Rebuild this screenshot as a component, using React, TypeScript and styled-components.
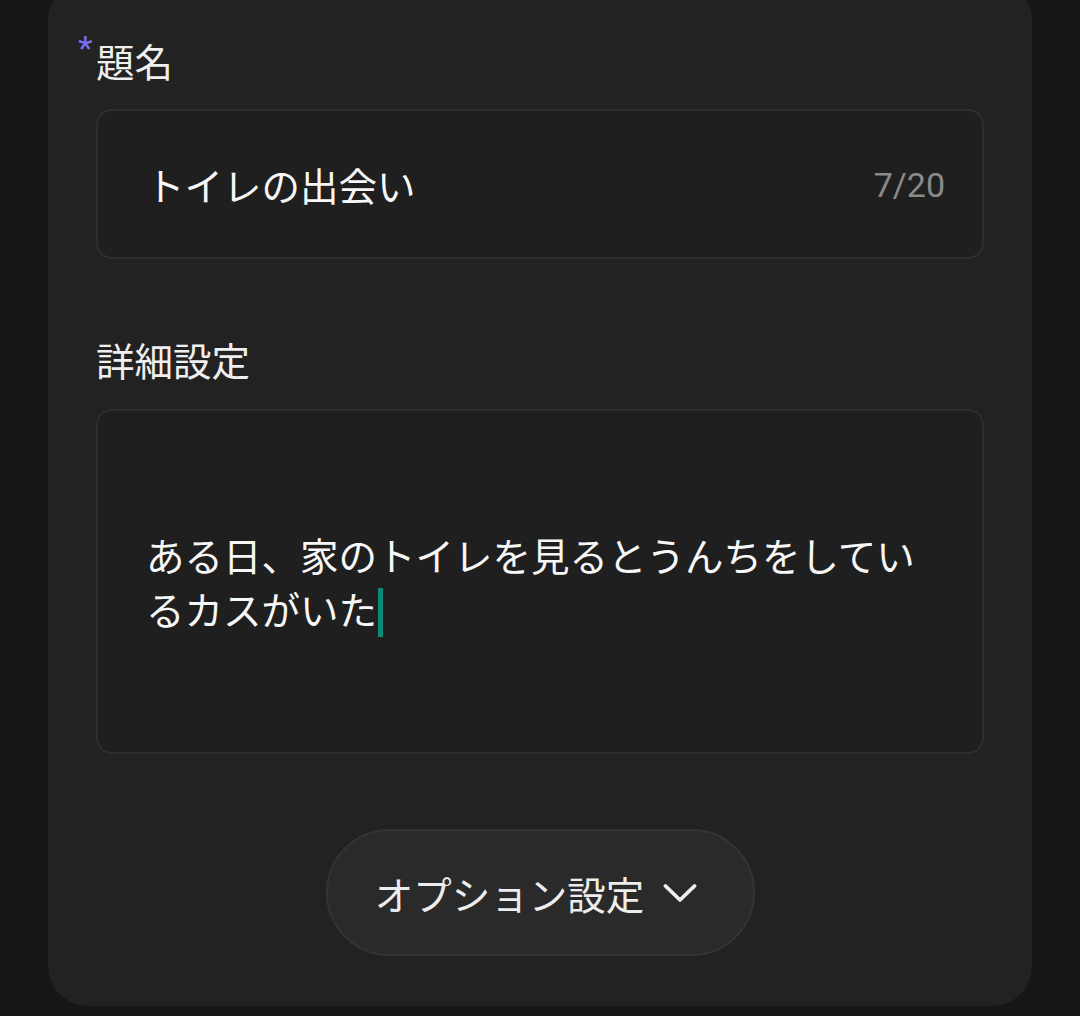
import React from 'react'
import styled, { createGlobalStyle } from 'styled-components'

const GlobalStyle = createGlobalStyle`
  html, body {
    margin: 0;
    padding: 0;
    background: #161616;
  }
  body {
    font-family: 'Noto Sans CJK JP', 'Noto Sans', sans-serif;
    color: #eeeeee;
  }
`

const Page = styled.div`
  width: 1080px;
  height: 1016px;
  overflow: hidden;
  padding: 0 48px;
  box-sizing: border-box;
`

const Card = styled.div`
  margin-top: -20px;
  background: #222222;
  border-radius: 40px;
  padding: 53px 48px 50px 48px;
  display: flex;
  flex-direction: column;
`

const Label = styled.div`
  position: relative;
  font-size: 38.5px;
  line-height: 54px;
  color: #efefef;
`

const Asterisk = styled.span`
  position: absolute;
  left: -18px;
  top: -12px;
  font-size: 34px;
  color: #7b6ef2;
  font-family: 'Roboto', sans-serif;
`

const InputBox = styled.div`
  margin-top: 22px;
  height: 150px;
  box-sizing: border-box;
  border: 2px solid #2e2e2e;
  border-radius: 16px;
  background: #1f1f1f;
  display: flex;
  align-items: center;
  justify-content: space-between;
  padding: 0 37px 0 48px;
`

const InputText = styled.span`
  font-size: 38.5px;
  color: #f7f7f7;
`

const Counter = styled.span`
  font-family: 'Roboto', sans-serif;
  font-size: 34px;
  color: #8a8a8a;
  margin-top: 2px;
`

const SecondLabel = styled(Label)`
  margin-top: 73px;
`

const TextArea = styled.div`
  margin-top: 23px;
  height: 345px;
  box-sizing: border-box;
  border: 2px solid #2e2e2e;
  border-radius: 16px;
  background: #1f1f1f;
  display: flex;
  align-items: center;
  padding: 0 50px 0 48px;
`

const Content = styled.div`
  font-size: 38.5px;
  line-height: 54px;
  color: #f7f7f7;
  word-break: break-all;
`

const Caret = styled.span`
  display: inline-block;
  width: 5px;
  height: 49px;
  margin-left: 1px;
  background: #0f8a78;
  vertical-align: -12px;
`

const ButtonRow = styled.div`
  margin-top: 75px;
  display: flex;
  justify-content: center;
`

const OptionButton = styled.button`
  height: 127px;
  width: 429px;
  box-sizing: border-box;
  border-radius: 64px;
  border: 2px solid #343434;
  background: #2a2a2a;
  color: #ededed;
  font-family: 'Noto Sans CJK JP', 'Noto Sans', sans-serif;
  font-size: 38.5px;
  display: flex;
  align-items: center;
  justify-content: center;
  gap: 19px;
  padding: 0 8px 0 0;
`

const Chevron = () => (
  <svg width="34" height="22" viewBox="0 0 34 22" fill="none">
    <polyline
      points="2.5,4 17,18 31.5,4"
      stroke="#efefef"
      strokeWidth="3.8"
      strokeLinecap="round"
      strokeLinejoin="round"
    />
  </svg>
)

const App = () => (
  <Page>
    <GlobalStyle />
    <Card>
      <Label>
        <Asterisk>*</Asterisk>
        題名
      </Label>
      <InputBox>
        <InputText>トイレの出会い</InputText>
        <Counter>7/20</Counter>
      </InputBox>
      <SecondLabel>詳細設定</SecondLabel>
      <TextArea>
        <Content>
          ある日、家のトイレを見るとうんちをしているカスがいた
          <Caret />
        </Content>
      </TextArea>
      <ButtonRow>
        <OptionButton>
          オプション設定
          <Chevron />
        </OptionButton>
      </ButtonRow>
    </Card>
  </Page>
)

export default App
